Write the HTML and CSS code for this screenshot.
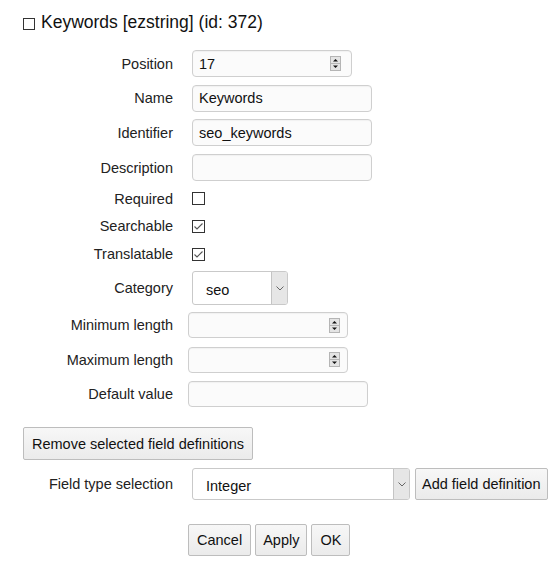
FILE: index.html
```html
<!DOCTYPE html>
<html>
<head>
<meta charset="utf-8">
<link rel="stylesheet" href="styles.css">
</head>
<body>
<div class="page">
  <h2 class="title"><span class="box"></span>Keywords [ezstring] (id: 372)</h2>

  <div class="grid grid-main">
    <label class="lbl">Position</label>
    <div class="field w160"><span class="val">17</span><svg class="spin" width="11" height="15" viewBox="0 0 11 15"><rect x="0.5" y="0.5" width="10" height="14" fill="#e4e4e4" stroke="#b5b5b5"/><line x1="1" y1="7.5" x2="10" y2="7.5" stroke="#b5b5b5"/><path d="M3 5.5 L8 5.5 L5.5 3 Z" fill="#111"/><path d="M3 9.5 L8 9.5 L5.5 12 Z" fill="#111"/></svg></div>

    <label class="lbl">Name</label>
    <div class="field w180"><span class="val">Keywords</span></div>

    <label class="lbl">Identifier</label>
    <div class="field w180"><span class="val">seo_keywords</span></div>

    <label class="lbl">Description</label>
    <div class="field w180"></div>

    <label class="lbl">Required</label>
    <span class="check"></span>

    <label class="lbl">Searchable</label>
    <span class="check"><svg width="11" height="11" viewBox="0 0 11 11"><path d="M1.5 5.5 L4 8 L9.5 2.5" fill="none" stroke="#555" stroke-width="1.1"/></svg></span>

    <label class="lbl">Translatable</label>
    <span class="check"><svg width="11" height="11" viewBox="0 0 11 11"><path d="M1.5 5.5 L4 8 L9.5 2.5" fill="none" stroke="#555" stroke-width="1.1"/></svg></span>

    <label class="lbl">Category</label>
    <div class="select sel-cat"><span class="sel-val">seo</span><span class="arrow"><svg width="8" height="5" viewBox="0 0 8 5"><path d="M0.5 0.5 L4 4 L7.5 0.5" fill="none" stroke="#666" stroke-width="1"/></svg></span></div>
  </div>

  <div class="grid grid-len">
    <label class="lbl">Minimum length</label>
    <div class="field fsmall w160"><span class="val"></span><svg class="spin" width="11" height="15" viewBox="0 0 11 15"><rect x="0.5" y="0.5" width="10" height="14" fill="#e4e4e4" stroke="#b5b5b5"/><line x1="1" y1="7.5" x2="10" y2="7.5" stroke="#b5b5b5"/><path d="M3 5.5 L8 5.5 L5.5 3 Z" fill="#111"/><path d="M3 9.5 L8 9.5 L5.5 12 Z" fill="#111"/></svg></div>

    <label class="lbl">Maximum length</label>
    <div class="field fsmall w160"><span class="val"></span><svg class="spin" width="11" height="15" viewBox="0 0 11 15"><rect x="0.5" y="0.5" width="10" height="14" fill="#e4e4e4" stroke="#b5b5b5"/><line x1="1" y1="7.5" x2="10" y2="7.5" stroke="#b5b5b5"/><path d="M3 5.5 L8 5.5 L5.5 3 Z" fill="#111"/><path d="M3 9.5 L8 9.5 L5.5 12 Z" fill="#111"/></svg></div>

    <label class="lbl">Default value</label>
    <div class="field fsmall w180"></div>
  </div>

  <div class="remove-row"><button class="btn">Remove selected field definitions</button></div>

  <div class="type-row">
    <label class="lbl">Field type selection</label>
    <div class="select sel-type"><span class="sel-val">Integer</span><span class="arrow"><svg width="8" height="5" viewBox="0 0 8 5"><path d="M0.5 0.5 L4 4 L7.5 0.5" fill="none" stroke="#666" stroke-width="1"/></svg></span></div>
    <button class="btn">Add field definition</button>
  </div>

  <div class="actions"><button class="btn btn-cancel">Cancel</button> <button class="btn btn-apply">Apply</button> <button class="btn btn-ok">OK</button></div>
</div>
</body>
</html>
```

FILE: styles.css
```css
* { box-sizing: border-box; }
html, body { margin: 0; padding: 0; background: #fff; }
body {
  font-family: "Liberation Sans", Arial, sans-serif;
  font-size: 14.5px;
  color: #222;
}
.page { width: 556px; }

.title {
  display: flex;
  align-items: center;
  margin: 12px 0 0 0;
  padding-left: 23px;
  font-size: 17.5px;
  font-weight: normal;
  line-height: 20px;
  height: 20px;
  color: #111;
}
.title .box {
  width: 12px;
  height: 12px;
  border: 1px solid #333;
  margin: 3px 6px 0 0;
  background: #fff;
}

.grid {
  display: grid;
  grid-template-columns: 173px auto;
  align-items: center;
  justify-items: start;
}
.grid-main {
  margin-top: 14px;
  column-gap: 19px;
  grid-template-rows: 35px 34px 35px 35px 27px 28px 28px 40px;
}
.grid-len {
  column-gap: 15px;
  grid-template-rows: 34px 35px 34px;
}
.lbl {
  justify-self: end;
  text-align: right;
  white-space: nowrap;
}

.field {
  display: flex;
  align-items: center;
  justify-content: space-between;
  height: 27px;
  padding: 0 10px 0 6px;
  border: 1px solid #cfcfcf;
  border-radius: 4px;
  background: #fbfbfb;
  box-shadow: inset 0 1px 1px rgba(0,0,0,0.04);
}
.fsmall { height: 26px; padding-right: 7px; }
.w160 { width: 160px; }
.w180 { width: 180px; }
.val { color: #111; }
.spin { display: block; }

.check {
  display: flex;
  align-items: center;
  justify-content: center;
  width: 13px;
  height: 13px;
  border: 1px solid #333;
  background: #fff;
}
.check svg { display: block; }

.select {
  display: flex;
  align-items: stretch;
  border: 1px solid #c9c9c9;
  border-radius: 3px;
  background: #fff;
  overflow: hidden;
}
.sel-val {
  flex: 1;
  display: flex;
  align-items: center;
  padding: 3px 0 0 13px;
  color: #111;
}
.arrow {
  width: 16px;
  display: flex;
  align-items: center;
  justify-content: center;
  background: #e6e6e6;
  border-left: 1px solid #c4c4c4;
}
.sel-cat { width: 96px; height: 34px; }
.sel-type { width: 218px; height: 32px; }

.btn {
  font-family: "Liberation Sans", Arial, sans-serif;
  font-size: 14.5px;
  color: #111;
  height: 32px;
  padding: 0 7px;
  border: 1px solid #bdbdbd;
  border-radius: 2px;
  background: linear-gradient(#f7f7f7, #ebebeb);
  cursor: pointer;
}

.remove-row {
  margin-top: 16px;
  padding-left: 23px;
}
.remove-row .btn { height: 33px; padding: 0 8px; }

.type-row {
  display: flex;
  align-items: center;
  margin-top: 8px;
}
.type-row .lbl { width: 173px; margin-right: 19px; }
.type-row .btn { margin-left: 5px; padding: 0 6px; }

.actions {
  margin-top: 24px;
  padding-left: 188px;
}
.btn-cancel { padding: 0 8px; }
.btn-apply { padding: 0 7px; }
.btn-ok { padding: 0 8px; }
```
